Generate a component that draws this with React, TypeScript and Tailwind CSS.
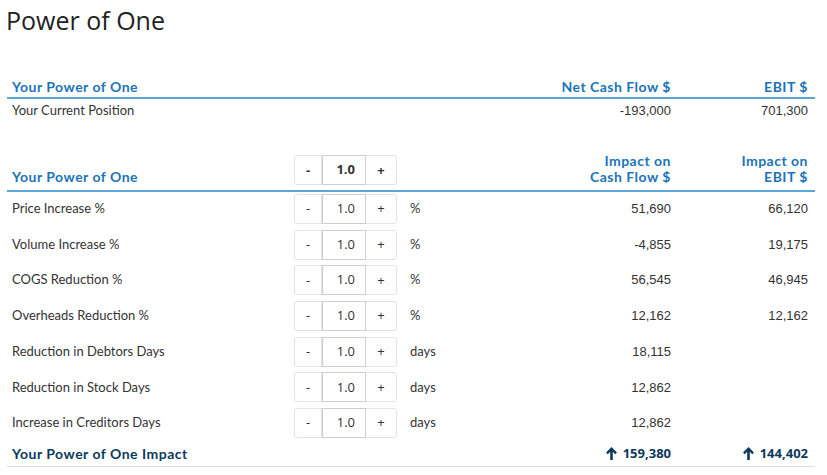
import React, { useState } from 'react';

const rowsInit = [
  { label: 'Price Increase %', unit: '%', cash: '51,690', ebit: '66,120' },
  { label: 'Volume Increase %', unit: '%', cash: '-4,855', ebit: '19,175' },
  { label: 'COGS Reduction %', unit: '%', cash: '56,545', ebit: '46,945' },
  { label: 'Overheads Reduction %', unit: '%', cash: '12,162', ebit: '12,162' },
  { label: 'Reduction in Debtors Days', unit: 'days', cash: '18,115', ebit: '' },
  { label: 'Reduction in Stock Days', unit: 'days', cash: '12,862', ebit: '' },
  { label: 'Increase in Creditors Days', unit: 'days', cash: '12,862', ebit: '' },
];

const labelFont = "font-['Lato','Noto_Sans',sans-serif]";
const numFont = "font-['Liberation_Sans',Arial,sans-serif]";
const grid = 'grid grid-cols-[287px_103px_1fr_150px_137px] items-center';
const heading = 'text-[14px] font-bold tracking-[0.5px]';

const Stepper = ({ value, bold }: { value: number; bold?: boolean }) => (
  <div className="flex h-[30px] w-[103px] rounded-[3px] border border-[#e3e3e3] bg-white font-['Open_Sans',sans-serif] text-[13px] tracking-normal text-[#333]">
    <button className="w-[27px] border-r border-[#e3e3e3] text-center leading-none">-</button>
    <div className={`flex w-[44px] items-center justify-end border border-[#cfcfcf] -my-px pr-[10px] ${bold ? 'font-bold' : 'font-normal'}`}>
      {value.toFixed(1)}
    </div>
    <button className="flex-1 text-center leading-none">+</button>
  </div>
);

const UpArrow = () => (
  <svg width="11" height="13" viewBox="0 0 11 13" className="mr-[6px] inline-block">
    <path d="M5.5 0 L11 5.6 L9.2 7.3 L6.8 4.8 L6.8 13 L4.2 13 L4.2 4.8 L1.8 7.3 L0 5.6 Z" fill="#0c3a5c" />
  </svg>
);

export default function App() {
  const [values] = useState(rowsInit.map(() => 1.0));
  return (
    <div className="h-[475px] w-[827px] bg-white text-[#333]">
      <h1 className="pl-[6px] pt-[3px] font-['Open_Sans',sans-serif] text-[25px] leading-[34px] text-[#222]">
        Power of One
      </h1>

      <div className={`mx-[7px] mt-[36px] w-[808px] ${labelFont} text-[13px]`}>
        <div className={`${grid} ${heading} h-[26px] border-b-2 border-[#5ba6d9] pt-[2px] text-[#1b74b9]`}>
          <div className="pl-[5px]">Your Power of One</div>
          <div />
          <div />
          <div className="pr-[7px] text-right">Net Cash Flow $</div>
          <div className="pr-[7px] text-right">EBIT $</div>
        </div>
        <div className={`${grid} h-[24px]`}>
          <div className="pl-[5px]">Your Current Position</div>
          <div />
          <div />
          <div className={`${numFont} pr-[7px] text-right`}>-193,000</div>
          <div className={`${numFont} pr-[7px] text-right`}>701,300</div>
        </div>

        <div className={`${grid} ${heading} mt-[29px] h-[40px] items-end border-b-2 border-[#5ba6d9] pb-[4px] text-[#1b74b9]`}>
          <div className="pb-px pl-[5px] leading-[16px]">Your Power of One</div>
          <div className="pb-px"><Stepper value={1.0} bold /></div>
          <div />
          <div className="pb-px pr-[7px] text-right leading-[16px]">Impact on<br />Cash Flow $</div>
          <div className="pb-px pr-[7px] text-right leading-[16px]">Impact on<br />EBIT $</div>
        </div>

        <div className="-mt-px">
          {rowsInit.map((r, i) => (
            <div key={r.label} className={`${grid} h-[35.7px]`}>
              <div className="pl-[5px]">{r.label}</div>
              <Stepper value={values[i]} />
              <div className="pl-[13px]">{r.unit}</div>
              <div className={`${numFont} pr-[7px] text-right`}>{r.cash}</div>
              <div className={`${numFont} pr-[7px] text-right`}>{r.ebit}</div>
            </div>
          ))}
        </div>

        <div className={`${grid} h-[26px] border-b border-[#dedede] font-bold text-[#0c3a5c]`}>
          <div className={`pl-[5px] ${heading}`}>Your Power of One Impact</div>
          <div />
          <div />
          <div className="flex items-center justify-end pr-[7px] font-['Open_Sans',sans-serif]"><UpArrow />159,380</div>
          <div className="flex items-center justify-end pr-[7px] font-['Open_Sans',sans-serif]"><UpArrow />144,402</div>
        </div>
      </div>
    </div>
  );
}
